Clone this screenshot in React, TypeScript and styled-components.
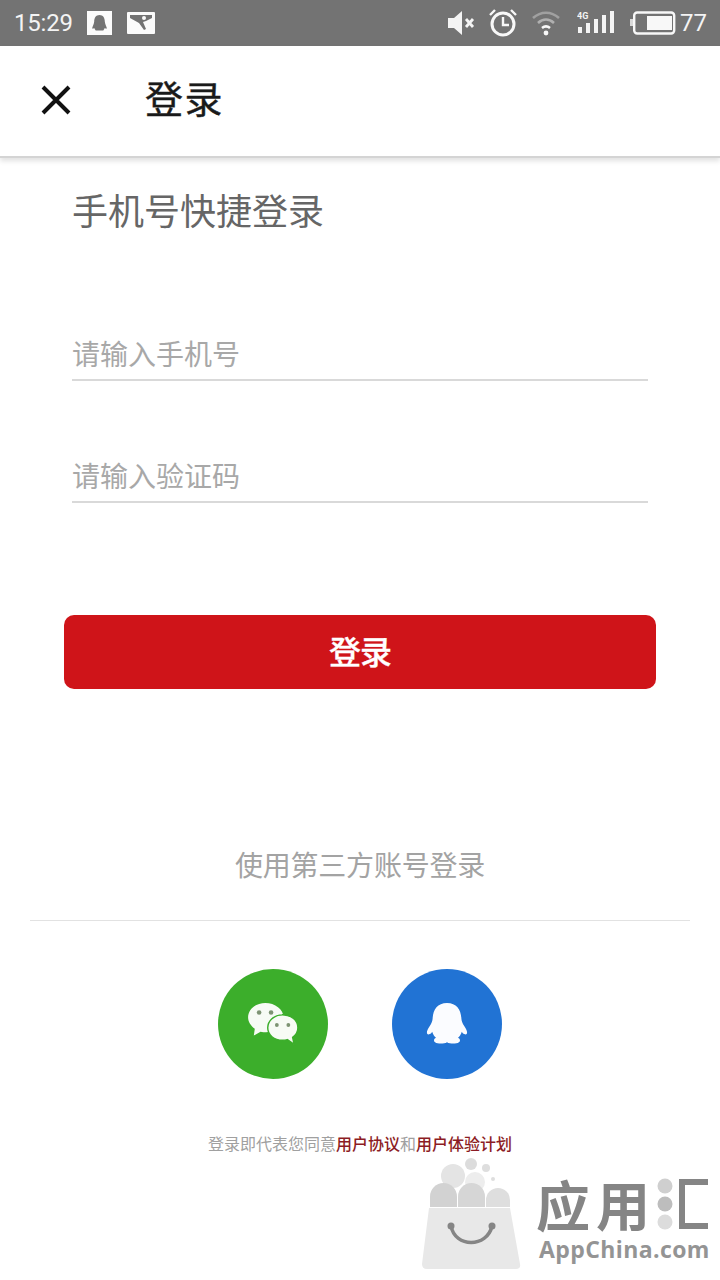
import React from "react";
import styled, { createGlobalStyle } from "styled-components";

const CJK = `"Noto Sans CJK SC", "Noto Sans", sans-serif`;

const Global = createGlobalStyle`
  html, body { margin: 0; padding: 0; background: #fff; }
  body { font-family: ${CJK}; }
  * { box-sizing: border-box; }
`;

const Page = styled.div`
  position: relative;
  width: 720px;
  height: 1280px;
  overflow: hidden;
  background: #fff;
  display: flex;
  flex-direction: column;
`;

const StatusBar = styled.div`
  height: 46px;
  flex: none;
  background: #737373;
  display: flex;
  align-items: center;
  padding: 0 13px 0 14px;
  color: #f4f4f4;
`;

const Time = styled.span`
  font: 24px/1 Roboto, sans-serif;
  letter-spacing: -0.2px;
  width: 73px;
`;

const NotifyIcons = styled.div`
  display: flex;
  align-items: center;
  gap: 15px;
`;

const StatusIcons = styled.div`
  margin-left: auto;
  display: flex;
  align-items: center;
`;

const SpeakerIcon = styled.svg`
  margin-right: 11px;
`;
const AlarmIcon = styled.svg`
  margin-right: 13px;
`;
const WifiIcon = styled.svg`
  margin-right: 16px;
`;
const SignalIcon = styled.svg`
  margin-right: 15px;
`;

const Battery = styled.span`
  font: 24px/1 Roboto, sans-serif;
  margin-left: 4px;
`;

const Header = styled.header`
  height: 112px;
  flex: none;
  background: #fff;
  display: flex;
  align-items: center;
  padding: 0 0 3px 40px;
  border-bottom: 2px solid #d4d4d4;
  box-shadow: 0 3px 5px rgba(0, 0, 0, 0.12);
  position: relative;
`;

const Title = styled.h1`
  margin: -6px 0 0 73px;
  font: 400 38px/1 ${CJK};
  color: #1a1a1a;
  letter-spacing: 1.500px;
  -webkit-text-stroke: 0.4px #1a1a1a;
`;

const Form = styled.main`
  display: flex;
  flex-direction: column;
  padding: 30px 72px 0;
`;

const Heading = styled.h2`
  margin: 0;
  font: 400 36px/1.2 ${CJK};
  color: #666;
  height: 44px;
`;

const Field = styled.div<{ $top: number }>`
  margin-top: ${(p) => p.$top}px;
  height: 48px;
  border-bottom: 2px solid #d9d9d9;
  font: 400 28px/40px ${CJK};
  color: #a8a8a8;
`;

const SubmitWrap = styled.div`
  margin: 112px -8px 0;
`;

const Submit = styled.button`
  display: block;
  width: 100%;
  height: 74px;
  border: 0;
  border-radius: 10px;
  background: #cf1419;
  color: #fff;
  font: 500 32px/1 ${CJK};
  letter-spacing: -1px;
  padding: 0 0 4px;
  -webkit-text-stroke: 0.3px #fff;
`;

const Third = styled.section`
  display: flex;
  flex-direction: column;
  align-items: center;
  padding-top: 155px;
`;

const ThirdLabel = styled.div`
  font: 400 28px/40px ${CJK};
  letter-spacing: -0.2px;
  color: #a3a3a3;
`;

const Divider = styled.div`
  width: 660px;
  height: 1px;
  background: #e2e2e2;
  margin-top: 36px;
`;

const Socials = styled.div`
  display: flex;
  gap: 64px;
  margin-top: 48px;
`;

const Circle = styled.div<{ $bg: string }>`
  width: 110px;
  height: 110px;
  border-radius: 50%;
  background: ${(p) => p.$bg};
  display: flex;
  align-items: center;
  justify-content: center;
`;

const Terms = styled.p`
  margin: 52px 0 0;
  font: 400 16px/24px ${CJK};
  color: #a0a0a0;
`;

const TermsLink = styled.span`
  color: #8c1c24;
  font-weight: 500;
`;

const Watermark = styled.div`
  position: absolute;
  left: 420px;
  top: 1158px;
  width: 300px;
  height: 122px;
  display: flex;
`;

const WatermarkText = styled.div`
  position: absolute;
  left: 116px;
  top: 16px;
  display: flex;
  flex-direction: column;
`;

const WatermarkCn = styled.div`
  display: flex;
  align-items: center;
  font: 700 54px/60px ${CJK};
  color: #858585;
  letter-spacing: 6px;
`;

const WatermarkDots = styled.svg`
  width: 16px;
  height: 54px;
  margin: 0 5px 0 1px;
`;

const WatermarkEn = styled.div`
  font: 700 23px/26px "Open Sans", sans-serif;
  color: #949494;
  letter-spacing: 0.4px;
  margin: 2px 0 0 3px;
`;

export default function App() {
  return (
    <Page>
      <Global />
      <StatusBar>
        <Time>15:29</Time>
        <NotifyIcons>
          <svg width="25" height="24" viewBox="0 0 25 24">
            <rect width="25" height="24" fill="#fbfbfb" />
            <path d="M12.500 4c-3.600 0-5.200 2.800-5.300 6.400-.2 2.600-1.500 4.600-2 6.600 0 1 1 1 2 0 .3.800 1 1.700 1.500 2.500h7.600c.5-.8 1.200-1.700 1.500-2.500 1 1 2 1 2 0-.5-2-1.800-4-2-6.600C17.700 6.800 16.100 4 12.500 4z" fill="#737373" />
          </svg>
          <svg width="28" height="22" viewBox="0 0 28 22">
            <rect width="28" height="22" rx="1" fill="#fbfbfb" />
            <path d="M3 3h22v3l-6 3-3 1 3 7-2 1-5-7-9-5z" fill="#737373" />
            <circle cx="17" cy="6" r="2" fill="#fbfbfb" />
          </svg>
        </NotifyIcons>
        <StatusIcons>
          <SpeakerIcon width="30" height="26" viewBox="0 0 30 26">
            <path d="M1 8h6l8-7v24l-8-7H1z" fill="#f4f4f4" />
            <path d="M19 9l7 8M26 9l-7 8" stroke="#f4f4f4" strokeWidth="2.800" fill="none" />
          </SpeakerIcon>
          <AlarmIcon width="30" height="30" viewBox="0 0 30 30">
            <circle cx="15" cy="16" r="11" fill="none" stroke="#f8f8f8" strokeWidth="3" />
            <path d="M15 9v8h6" fill="none" stroke="#f8f8f8" strokeWidth="2.400" />
            <path d="M2 7l5-5M28 7l-5-5" stroke="#f8f8f8" strokeWidth="2.400" fill="none" />
          </AlarmIcon>
          <WifiIcon width="30" height="28" viewBox="0 0 30 28">
            <path d="M2 9c8-7 18-7 26 0" fill="none" stroke="#a0a0a0" strokeWidth="2.600" />
            <path d="M7 14c5-4.500 11-4.500 16 0" fill="none" stroke="#b0b0b0" strokeWidth="2.600" />
            <path d="M11 19c2.500-2 5.500-2 8 0" fill="none" stroke="#f8f8f8" strokeWidth="2.600" />
            <circle cx="15" cy="24" r="2.400" fill="#f8f8f8" />
          </WifiIcon>
          <SignalIcon width="38" height="26" viewBox="0 0 38 26">
            <text x="0" y="9" fontSize="9" fontWeight="700" fontFamily="Roboto, sans-serif" fill="#f4f4f4">4G</text>
            <rect x="1" y="17" width="4" height="6" fill="#f4f4f4" />
            <rect x="9" y="13" width="4" height="10" fill="#f4f4f4" />
            <rect x="17" y="9" width="4" height="14" fill="#f4f4f4" />
            <rect x="25" y="5" width="4" height="18" fill="#f4f4f4" />
            <rect x="33" y="1" width="4" height="22" fill="#f4f4f4" />
          </SignalIcon>
          <svg width="46" height="24" viewBox="0 0 46 24">
            <rect x="0" y="8" width="3" height="7" fill="#d8d8d8" />
            <rect x="4.200" y="1.500" width="40" height="21" rx="3" fill="none" stroke="#f8f8f8" strokeWidth="2.400" />
            <rect x="17" y="5" width="25" height="14" fill="#f8f8f8" />
          </svg>
          <Battery>77</Battery>
        </StatusIcons>
      </StatusBar>

      <Header>
        <svg width="32" height="32" viewBox="0 0 32 32">
          <path d="M3 3l26 26M29 3L3 29" stroke="#111" strokeWidth="4" fill="none" />
        </svg>
        <Title>登录</Title>
      </Header>

      <Form>
        <Heading>手机号快捷登录</Heading>
        <Field $top={101}>请输入手机号</Field>
        <Field $top={74}>请输入验证码</Field>
        <SubmitWrap>
          <Submit>登录</Submit>
        </SubmitWrap>
      </Form>

      <Third>
        <ThirdLabel>使用第三方账号登录</ThirdLabel>
        <Divider />
        <Socials>
          <Circle $bg="#3cae2b">
            <svg width="52" height="46" viewBox="0 0 54 48">
              <path d="M19 2C9 2 1 8.500 1 17c0 5 3 9 7 12l-1 7 7-4c2 .4 4 .6 6 .6C31 32 38 25 38 17 38 8.500 29 2 19 2z" fill="#f7fbf5" />
              <path d="M37 14.500c-9 0-15.500 6-15.500 13.500S28 41 37 41c2 0 3.500-.2 5-.7l7 5-1.500-7.500c3.500-2.500 5.500-6 5.500-10 0-7.500-7-13.500-16-13.500z" fill="#f7fbf5" stroke="#3cae2b" strokeWidth="1.500" />
              <circle cx="12.500" cy="12" r="2.400" fill="#7d9373" />
              <circle cx="25" cy="12" r="2.400" fill="#7d9373" />
              <circle cx="31" cy="25" r="2" fill="#7d9373" />
              <circle cx="43" cy="25" r="2" fill="#7d9373" />
            </svg>
          </Circle>
          <Circle $bg="#2173d4">
            <svg width="44" height="44" viewBox="0 0 46 46">
              <path d="M23 1C13 1 8.500 8 8 17c-.2 3-1 5-3 8-2 3-3 5-3 7 0 2 1.500 2.500 3 1.500 1-.5 2-1.500 2.500-2.500 1 3 2.500 5 4 6.500-2 1-3 3-1 4.500 3 2 9 2 12.500 0 3.500 2 9.500 2 12.500 0 2-1.500 1-3.500-1-4.500 1.500-1.500 3-3.500 4-6.500.5 1 1.500 2 2.500 2.500 1.500 1 3 .5 3-1.500 0-2-1-4-3-7-2-3-2.800-5-3-8C37.500 8 33 1 23 1z" fill="#fbfcff" />
            </svg>
          </Circle>
        </Socials>
        <Terms>
          登录即代表您同意<TermsLink>用户协议</TermsLink>和<TermsLink>用户体验计划</TermsLink>
        </Terms>
      </Third>

      <Watermark>
        <svg width="110" height="122" viewBox="0 0 110 122">
          <circle cx="33" cy="18" r="12" fill="#e4e4e4" />
          <circle cx="51" cy="6" r="6" fill="#dcdcdc" />
          <circle cx="66" cy="10" r="4" fill="#dedede" />
          <circle cx="73" cy="21" r="2" fill="#dedede" />
          <circle cx="55" cy="24" r="10" fill="#ededed" />
          <path d="M10 49V38.500a13.500 13.500 0 0 1 27 0V49z" fill="#d2d2d2" />
          <path d="M38 49V38.500a13.500 13.500 0 0 1 27 0V49z" fill="#d6d6d6" />
          <path d="M66 49V42a12 12 0 0 1 24 0V49z" fill="#dedede" />
          <path d="M9 50h81l10 56q1 5-4 5H7q-5 0-5-5z" fill="#e8e8e8" />
          <path d="M31 68c4 22 36 22 41 0" fill="none" stroke="#858585" strokeWidth="3.500" />
          <circle cx="31" cy="68" r="3.500" fill="#858585" />
          <circle cx="72" cy="68" r="3.500" fill="#858585" />
        </svg>
        <WatermarkText>
          <WatermarkCn>
            应用
            <WatermarkDots viewBox="0 0 16 54">
              <circle cx="8" cy="9" r="7.500" fill="#cfcfcf" />
              <circle cx="8" cy="27" r="7.500" fill="#bdbdbd" />
              <circle cx="8" cy="45" r="7.500" fill="#dcdcdc" />
            </WatermarkDots>
            <svg width="32" height="50" viewBox="0 0 32 50">
              <path d="M30 3H4v44h26" fill="none" stroke="#858585" strokeWidth="6" />
            </svg>
          </WatermarkCn>
          <WatermarkEn>AppChina.com</WatermarkEn>
        </WatermarkText>
      </Watermark>
    </Page>
  );
}
